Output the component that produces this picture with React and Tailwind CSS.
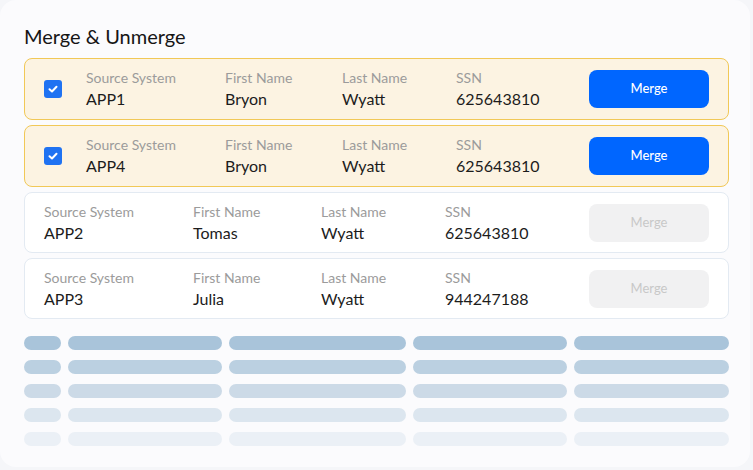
import React from 'react';

const rows = [
  { id: 1, source: 'APP1', first: 'Bryon', last: 'Wyatt', ssn: '625643810', selected: true },
  { id: 2, source: 'APP4', first: 'Bryon', last: 'Wyatt', ssn: '625643810', selected: true },
  { id: 3, source: 'APP2', first: 'Tomas', last: 'Wyatt', ssn: '625643810', selected: false },
  { id: 4, source: 'APP3', first: 'Julia', last: 'Wyatt', ssn: '944247188', selected: false },
];

const skeletonColors = ['bg-[#a9c4da]', 'bg-[#bbd0e1]', 'bg-[#ccdae7]', 'bg-[#dce6ef]', 'bg-[#ebf0f6]'];

function Field({ label, value, width }) {
  return (
    <div className={`${width} shrink-0`}>
      <div className="text-[14px] leading-5 text-[#9b9b9b]">{label}</div>
      <div className="text-[16px] leading-[22px] text-[#1c1c1c]">{value}</div>
    </div>
  );
}

function Checkbox() {
  return (
    <div className="w-[18px] h-[18px] rounded-[3px] bg-[#1f72f2] flex items-center justify-center shrink-0">
      <svg width="12" height="12" viewBox="0 0 12 12" fill="none">
        <path d="M2.5 6.2 L5 8.5 L9.5 3.8" stroke="white" strokeWidth="2" strokeLinecap="round" strokeLinejoin="round" />
      </svg>
    </div>
  );
}

function Row({ row }) {
  if (row.selected) {
    return (
      <div className="h-[62px] flex items-center pl-[19px] pr-[19px] rounded-[8px] border border-[#f1c857] bg-[#fcf3e2]">
        <Checkbox />
        <div className="w-[24px] shrink-0" />
        <Field label="Source System" value={row.source} width="w-[139px]" />
        <Field label="First Name" value={row.first} width="w-[117px]" />
        <Field label="Last Name" value={row.last} width="w-[114px]" />
        <Field label="SSN" value={row.ssn} width="w-[110px]" />
        <div className="flex-1" />
        <button className="w-[120px] h-[38px] rounded-[8px] bg-[#0066ff] text-white text-[13px] font-medium">
          Merge
        </button>
      </div>
    );
  }
  return (
    <div className="h-[61px] flex items-center pl-[19px] pr-[19px] rounded-[8px] border border-[#e3eaf2] bg-white">
      <Field label="Source System" value={row.source} width="w-[149px]" />
      <Field label="First Name" value={row.first} width="w-[128px]" />
      <Field label="Last Name" value={row.last} width="w-[124px]" />
      <Field label="SSN" value={row.ssn} width="w-[110px]" />
      <div className="flex-1" />
      <button className="w-[120px] h-[38px] rounded-[8px] bg-[#f1f1f2] text-[#c8c8c8] text-[13px]">
        Merge
      </button>
    </div>
  );
}

export default function App() {
  return (
    <div className="w-[753px] h-[470px] bg-[#f5f6f9] overflow-hidden" style={{ fontFamily: 'Lato, "Noto Sans", sans-serif' }}>
      <div className="w-[750px] h-[467px] rounded-[16px] bg-[#fbfbfd] px-[24px] pt-[22px]">
        <h1 className="text-[20px] leading-7 text-[#151515]">Merge &amp; Unmerge</h1>
        <div className="mt-[8px] w-[705px] flex flex-col gap-[5px]">
          {rows.map((row) => (
            <Row key={row.id} row={row} />
          ))}
        </div>
        <div className="mt-[17px] w-[705px] flex flex-col gap-[10px]">
          {skeletonColors.map((color, i) => (
            <div key={i} className="flex gap-[7px] h-[14px]">
              <div className={`w-[37px] rounded-full ${color}`} />
              <div className={`w-[154px] rounded-full ${color}`} />
              <div className={`w-[177px] rounded-full ${color}`} />
              <div className={`w-[154px] rounded-full ${color}`} />
              <div className={`flex-1 rounded-full ${color}`} />
            </div>
          ))}
        </div>
      </div>
    </div>
  );
}
